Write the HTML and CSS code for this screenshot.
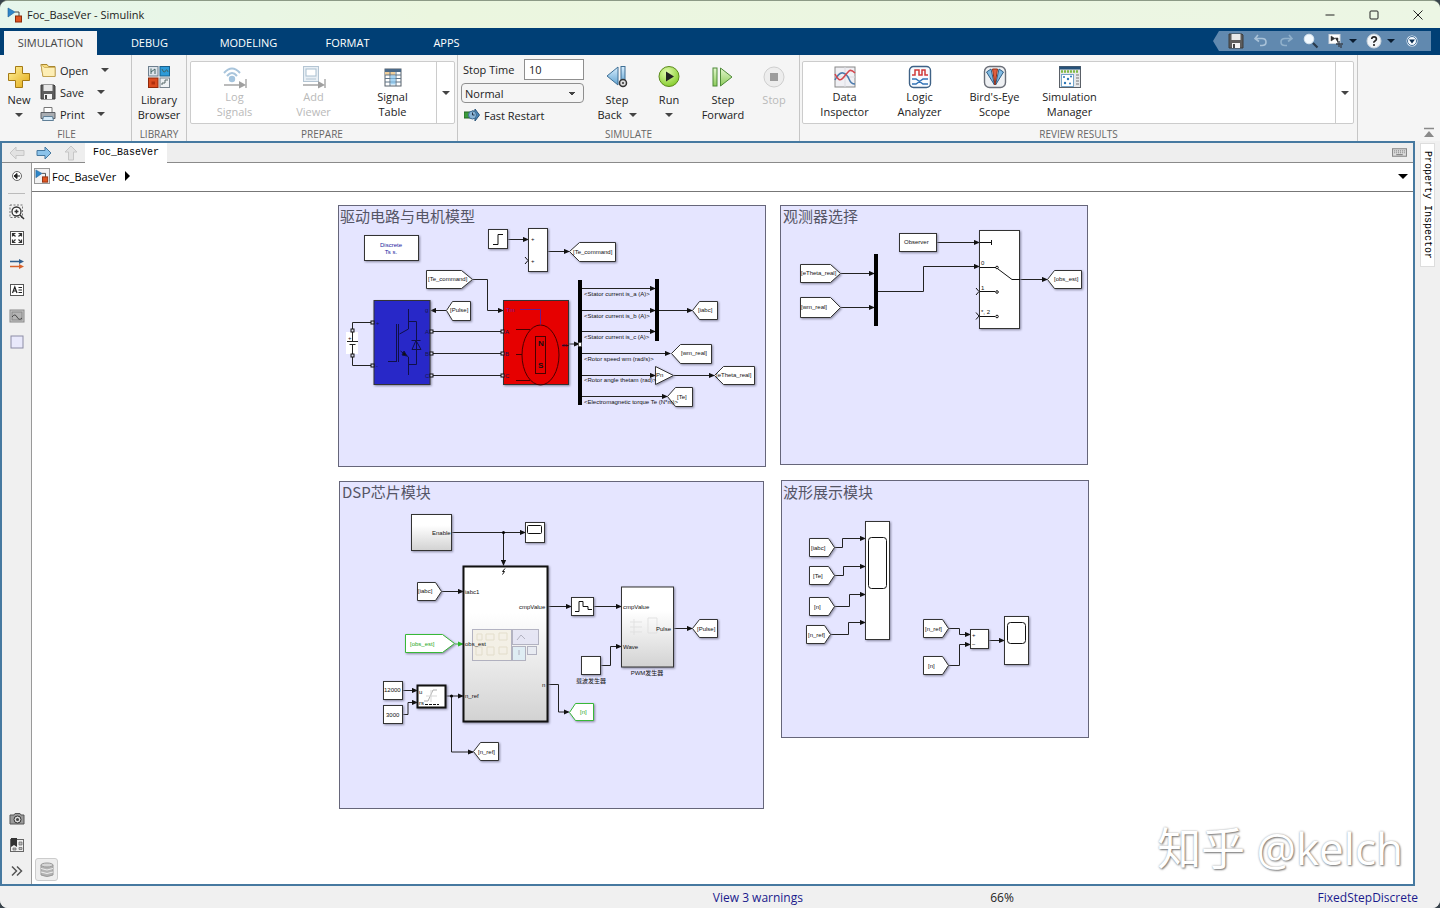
FILE: index.html
```html
<!DOCTYPE html>
<html lang="en">
<head>
<meta charset="utf-8">
<title>Foc_BaseVer - Simulink</title>
<link rel="stylesheet" href="styles.css">
</head>
<body>
<svg class="defs" aria-hidden="true">
  <defs>
    <linearGradient id="gold" x1="0" y1="0" x2="1" y2="1"><stop offset="0" stop-color="#fff3a0"/><stop offset="1" stop-color="#e3a913"/></linearGradient>
    <linearGradient id="sky" x1="0" y1="0" x2="0" y2="1"><stop offset="0" stop-color="#d9efff"/><stop offset="1" stop-color="#5fa2d0"/></linearGradient>
    <linearGradient id="leaf" x1="0" y1="0" x2="0" y2="1"><stop offset="0" stop-color="#e4f7cf"/><stop offset="1" stop-color="#8ccb5a"/></linearGradient>
    <radialGradient id="go" cx=".4" cy=".3" r=".8"><stop offset="0" stop-color="#e2fbb0"/><stop offset="1" stop-color="#7cc81e"/></radialGradient>
    <linearGradient id="sub" x1="0" y1="0" x2="0" y2="1"><stop offset=".3" stop-color="#fff"/><stop offset="1" stop-color="#d2d2d2"/></linearGradient>
    <marker id="arr" viewBox="0 0 6 6" refX="5" refY="3" markerWidth="6" markerHeight="6" markerUnits="userSpaceOnUse" orient="auto"><path d="M0 0.4L6 3L0 5.6z" fill="#111"/></marker>
    <marker id="arrg" viewBox="0 0 6 6" refX="5" refY="3" markerWidth="6" markerHeight="6" markerUnits="userSpaceOnUse" orient="auto"><path d="M0 0.4L6 3L0 5.6z" fill="#2fb52f"/></marker>
    <symbol id="model" viewBox="0 0 16 16"><path d="M1 1l7 4-7 5z" fill="#2e86c8" stroke="#1b5d93" stroke-width=".6"/><path d="M8 5h4v4" fill="none" stroke="#444"/><rect x="8.500" y="9" width="6" height="6" fill="#e0551f" stroke="#8e2c0a"/></symbol>
    <symbol id="disk" viewBox="0 0 16 16"><path d="M1 1h13l1 1v13H1z" fill="#5d5d5d" stroke="#3c3c3c"/><rect x="3.500" y="1" width="9" height="6" fill="#e8e8e8"/><rect x="4" y="10" width="8" height="5" fill="#f4f4f4"/><rect x="5" y="11" width="2" height="4" fill="#444"/></symbol>
    <symbol id="left" viewBox="0 0 16 14"><path d="M1 7l6-6v3.500h8v5H7V13z"/></symbol>
  </defs>
</svg>

<div class="window">
  <header class="titlebar">
    <svg class="i16"><use href="#model"/></svg>
    <h1>Foc_BaseVer - Simulink</h1>
    <div class="wincontrols">
      <button aria-label="Minimize"><svg viewBox="0 0 10 10"><path d="M.5 5h9"/></svg></button>
      <button aria-label="Maximize"><svg viewBox="0 0 10 10"><rect x="1" y="1" width="8" height="8" rx="1"/></svg></button>
      <button aria-label="Close"><svg viewBox="0 0 10 10"><path d="M.5.5l9 9M9.500.5l-9 9"/></svg></button>
    </div>
  </header>

  <nav class="tabs">
    <button class="tab active">SIMULATION</button>
    <button class="tab">DEBUG</button>
    <button class="tab">MODELING</button>
    <button class="tab">FORMAT</button>
    <button class="tab">APPS</button>
    <div class="quick">
      <button aria-label="Save"><svg class="i16"><use href="#disk"/></svg></button>
      <button aria-label="Undo"><svg class="i16" viewBox="0 0 16 16"><path d="M5 2L2 5.500l4 3M2.500 5.500H9q4 0 4 3.500t-4 3.500H7" fill="none" stroke="#a9c2d8" stroke-width="1.600"/></svg></button>
      <button aria-label="Redo"><svg class="i16" viewBox="0 0 16 16"><path d="M11 2l3 3.500-4 3M13.500 5.500H7q-4 0-4 3.500t4 3.500h2" fill="none" stroke="#90b0cb" stroke-width="1.600"/></svg></button>
      <button aria-label="Find"><svg class="i16" viewBox="0 0 16 16"><circle cx="6" cy="6" r="4.800" fill="#f3faff" stroke="#d7e4ee"/><path d="M10 10l4.500 4.500" stroke="#2a3b4c" stroke-width="2.200"/></svg></button>
      <button class="drop" aria-label="Favorites"><svg class="i16" viewBox="0 0 16 16"><rect x="1" y="1.500" width="11" height="9" fill="#fff" stroke="#cfd6dd"/><path d="M3 3l4 2.500L3 8zM7 5h3v5" fill="#333" stroke="#333" stroke-width=".5"/><path d="M8 11h7M11 8v6M13 12v3" stroke="#3b4450" stroke-width="1.400"/></svg><i class="caret dark"></i></button>
      <button class="drop" aria-label="Help"><svg class="i16" viewBox="0 0 16 16"><circle cx="8" cy="8" r="7" fill="#f1f5f8" stroke="#c9d3dc"/><path d="M5.700 6Q5.900 3.800 8.100 3.800T10.400 6Q10.400 7.200 9 8T8 9.800" fill="none" stroke="#222" stroke-width="1.700"/><circle cx="8" cy="12" r="1.100" fill="#222"/></svg><i class="caret dark"></i></button>
      <button aria-label="Minimize toolstrip"><svg class="i16" viewBox="0 0 16 16"><circle cx="8" cy="8" r="5.500" fill="#f7fbff"/><circle cx="8" cy="8" r="4.500" fill="none" stroke="#174d80" stroke-width=".8"/><path d="M5 6.500h6L8 10.500z" fill="#0b2c4f"/></svg></button>
    </div>
  </nav>

  <section class="ribbon">
    <div class="group file">
      <div class="body">
        <button class="big new"><svg class="i24" viewBox="0 0 24 24"><path d="M8.500 1.500h7v7h7v7h-7v7h-7v-7h-7v-7h7z" fill="url(#gold)" stroke="#a57a14"/></svg><span>New</span><i class="caret"></i></button>
        <div class="stack">
          <button class="small"><svg class="i16" viewBox="0 0 16 16"><path d="M1 2.500h6l1.500 2H15v10H3z" fill="#f8dc80" stroke="#a9862f"/><path d="M1 2.500l2 12h12V5.500H4.500z" fill="#fdeeb5" stroke="#b8963c" stroke-width=".6"/></svg><span class="wide-label">Open</span><i class="caret"></i></button>
          <button class="small"><svg class="i16"><use href="#disk"/></svg><span>Save</span><i class="caret"></i></button>
          <button class="small"><svg class="i16" viewBox="0 0 16 16"><path d="M4 1.500h8v5H4z" fill="#fff" stroke="#777"/><path d="M1 6.500h14v6H1z" fill="#a9adb2" stroke="#5c6066"/><path d="M3.500 10.500h9l1 4h-11z" fill="#d8ecfa" stroke="#5f7f97"/></svg><span>Print</span><i class="caret"></i></button>
        </div>
      </div>
      <h2>FILE</h2>
    </div>

    <div class="group library">
      <div class="body">
        <button class="big"><svg class="i24" viewBox="0 0 24 24"><g stroke-width="1"><rect x="1.500" y="1.500" width="9.500" height="9.500" fill="#dde4ea" stroke="#6d7f8e"/><rect x="13" y="1.500" width="9.500" height="9.500" fill="#2e9bd8" stroke="#17618e"/><rect x="1.500" y="13" width="9.500" height="9.500" fill="#dc4b1e" stroke="#8f2a0b"/><rect x="13" y="13" width="9.500" height="9.500" fill="#eef1f3" stroke="#77838d"/><path d="M4 9V3.500M4 7l4-3v5M15 4q2 5 3.500 2t2.500 1" fill="none" stroke="#466"/><path d="M4.500 16.500h3.500v3h-3.500z" fill="#b02f0d" stroke="none"/><path d="M15 20v-2h3v-3h3" fill="none" stroke="#566"/></g></svg><span>Library<br>Browser</span></button>
      </div>
      <h2>LIBRARY</h2>
    </div>

    <div class="group prepare">
      <div class="body">
        <div class="gallery">
          <div class="items">
            <button class="big" disabled><svg class="i24" viewBox="0 0 24 24"><g fill="none" stroke="#a9c5dc" stroke-width="2"><path d="M1 8Q9-1 17 8M4 11q5-6 10 0"/></g><circle cx="9" cy="14" r="3.200" fill="#a4c4de"/><path d="M1 20h16M23 14v9" stroke="#a5a5a5" stroke-width="1.400"/><path d="M16 16l7 4-7 3.500z" fill="#a0a0a0"/></svg><span>Log<br>Signals</span></button>
            <button class="big" disabled><svg class="i24" viewBox="0 0 24 24"><rect x="1.500" y="1.500" width="15" height="15" fill="#e8eff5" stroke="#b4c5d3"/><rect x="4" y="4" width="10" height="7" fill="#fff" stroke="#a9bfd0"/><path d="M4 14h10" stroke="#b4c5d3"/><path d="M1 20h16M23 14v9" stroke="#a5a5a5" stroke-width="1.400"/><path d="M16 16l7 4-7 3.500z" fill="#a0a0a0"/></svg><span>Add<br>Viewer</span></button>
            <button class="big"><svg class="i24" viewBox="0 0 24 24"><rect x="4" y="4" width="16" height="17" fill="#fff" stroke="#56616b"/><path d="M4 4h16v3H4z" fill="#4c6a88"/><path d="M4 7h10v3H4z" fill="#f1cf9a"/><path d="M4 10h16M4 13.500h16M4 17h16M9 7v14M15 7v14" stroke="#5f7487"/><rect x="9.500" y="10.500" width="5" height="9" fill="#7fc2ee" opacity=".7"/></svg><span>Signal<br>Table</span></button>
          </div>
          <button class="more" aria-label="More prepare tools"><i class="caret"></i></button>
        </div>
      </div>
      <h2>PREPARE</h2>
    </div>

    <div class="group simulate">
      <div class="body">
        <div class="settings">
          <div class="field"><label for="stop">Stop Time</label><input id="stop" type="text" value="10"></div>
          <select aria-label="Simulation mode"><option>Normal</option></select>
          <button class="restart"><svg class="i16" viewBox="0 0 16 16"><rect x="0" y="5" width="6" height="6" fill="#3a9a3a" stroke="#256825"/><path d="M8 4h3V2l4.500 6-4.500 6v-3H8z" fill="#4a86b8" stroke="#2a5478"/><circle cx="8.500" cy="8" r="4" fill="#8ab4d6" stroke="#3d6b91"/><path d="M8.500 5.500V8h2" fill="none" stroke="#234"/></svg><span>Fast Restart</span></button>
        </div>
        <button class="big run back"><svg class="i24" viewBox="0 0 24 24"><path d="M13 2v18L2 11z" fill="url(#sky)" stroke="#3e6f95"/><rect x="16" y="1.500" width="4" height="17" fill="url(#sky)" stroke="#3e6f95"/><circle cx="18" cy="18" r="3.500" fill="#ddd" stroke="#333" stroke-width="1.500"/><circle cx="18" cy="18" r="1" fill="#333"/></svg><span>Step<br>Back <i class="caret inline"></i></span></button>
        <button class="big run"><svg class="i24" viewBox="0 0 24 24"><circle cx="12" cy="11.500" r="10" fill="url(#go)" stroke="#5b8a1c"/><path d="M9 6.500l8 5-8 5z" fill="#222"/></svg><span>Run</span><i class="caret"></i></button>
        <button class="big run fwd"><svg class="i24" viewBox="0 0 24 24"><rect x="2" y="3" width="4" height="18" fill="url(#leaf)" stroke="#4d8a37"/><path d="M9.500 3v18L21 12z" fill="url(#leaf)" stroke="#4d8a37"/></svg><span>Step<br>Forward</span></button>
        <button class="big run stop" disabled><svg class="i24" viewBox="0 0 24 24"><circle cx="12" cy="12" r="10" fill="#ededed" stroke="#cfcfcf"/><rect x="8" y="8" width="8" height="8" fill="#9c9c9c"/></svg><span>Stop</span></button>
      </div>
      <h2>SIMULATE</h2>
    </div>

    <div class="group review">
      <div class="body">
        <div class="gallery">
          <div class="items">
            <button class="big"><svg class="i24" viewBox="0 0 24 24"><rect x="2" y="2" width="20" height="20" fill="#f0f0f4" stroke="#888"/><path d="M2 12h20M12 2v20" stroke="#dcdce2"/><path d="M2 15q4-8 8-7t6 6 6 5" fill="none" stroke="#4d7cae" stroke-width="1.600"/><path d="M2 9q4 9 8 4t6-7 6 2" fill="none" stroke="#d4484f" stroke-width="1.600"/></svg><span>Data<br>Inspector</span></button>
            <button class="big"><svg class="i24" viewBox="0 0 24 24"><rect x="1.500" y="1.500" width="21" height="21" rx="4" fill="#f8fbff" stroke="#3f6286" stroke-width="1.400"/><path d="M4 10h3V5h4v5h3V5h3v5h3" fill="none" stroke="#cf3a3a" stroke-width="1.500"/><path d="M4 14h4l7 5h5M4 19h4l7-5h5" fill="none" stroke="#3274b8" stroke-width="1.400"/></svg><span>Logic<br>Analyzer</span></button>
            <button class="big"><svg class="i24" viewBox="0 0 24 24"><rect x="1.500" y="1.500" width="21" height="21" rx="5" fill="#eef0f3" stroke="#6b6f78" stroke-width="1.400"/><path d="M3.500 7L8 4l3.500 16z" fill="#7fbbe4" stroke="#315f86"/><path d="M20.500 7L16 4l-3.500 16z" fill="#7fbbe4" stroke="#315f86"/><path d="M9.500 4h5L12 20z" fill="#e0603f" stroke="#963119"/></svg><span>Bird's-Eye<br>Scope</span></button>
            <button class="big"><svg class="i24" viewBox="0 0 24 24"><rect x="1.500" y="1.500" width="21" height="21" fill="#e6e8ea" stroke="#5a6067"/><path d="M1.500 1.500h21v3h-21z" fill="#27527a"/><path d="M3 6.500h18" stroke="#7fb843" stroke-width="2.500" stroke-dasharray="2 1"/><rect x="3.500" y="9.500" width="12" height="12" fill="#fff" stroke="#77a5c8"/><g fill="#2876b8"><circle cx="6" cy="12" r="1"/><circle cx="10" cy="14" r="1.200"/><circle cx="13" cy="11.500" r="1"/><circle cx="7" cy="18" r="1.200"/><circle cx="12" cy="18.500" r="1"/></g><path d="M18 10h3M18 13h3M18 16h3M18 19h3" stroke="#777"/></svg><span>Simulation<br>Manager</span></button>
          </div>
          <button class="more" aria-label="More review tools"><i class="caret"></i></button>
        </div>
      </div>
      <h2>REVIEW RESULTS</h2>
    </div>
    <button class="collapse" aria-label="Collapse toolstrip"><svg viewBox="0 0 12 12"><path d="M1 1.500h10" stroke="#8a8a8a" stroke-width="1.500"/><path d="M6 4l5 6H1z" fill="#8a8a8a"/></svg></button>
  </section>

  <div class="workspace">
    <section class="editor">
      <div class="doctabs">
        <button aria-label="Back"><svg viewBox="0 0 16 14" fill="#e2e2e2" stroke="#c6c6c6"><use href="#left"/></svg></button>
        <button aria-label="Forward"><svg class="flip" viewBox="0 0 16 14" fill="#8cc3ea" stroke="#47799f"><use href="#left"/></svg></button>
        <button aria-label="Up to parent"><svg class="up" viewBox="0 0 16 14" fill="#e2e2e2" stroke="#c6c6c6"><use href="#left"/></svg></button>
        <button class="doctab">Foc_BaseVer</button>
        <button class="keyboard" aria-label="Keyboard shortcuts"><svg viewBox="0 0 14 8"><rect x=".5" y=".5" width="13" height="7" fill="#ddd" stroke="#888"/><path d="M2 2.500h10M2 4.200h10" stroke="#888" stroke-dasharray="1 .8"/><path d="M4 6h6" stroke="#888"/></svg></button>
      </div>
      <div class="main">
        <aside class="palette">
          <button aria-label="Hide browser"><svg class="i16" viewBox="0 0 16 16"><circle cx="8" cy="8" r="4.500" fill="#fff" stroke="#666"/><path d="M5 8l3-2.500v5zM8 8h3" fill="#222" stroke="#222"/></svg></button>
          <hr>
          <button aria-label="Zoom"><svg class="i16" viewBox="0 0 16 16"><rect x="1" y="1" width="12.500" height="12.500" fill="none" stroke="#777" stroke-dasharray="2 1.500"/><circle cx="7.500" cy="7.500" r="4.500" fill="#fff" stroke="#333" stroke-width="1.300"/><path d="M5.500 7.500h4M7.500 5.500v4M11 11l4 4" stroke="#333" stroke-width="1.500"/></svg></button>
          <button aria-label="Fit to view"><svg class="i16" viewBox="0 0 16 16"><rect x="1.500" y="1.500" width="13" height="13" fill="#fff" stroke="#555"/><g fill="none" stroke="#333" stroke-width="1.200"><path d="M3.500 6.500v-3h3M3.500 3.500l3 3M9.500 3.500h3v3M12.500 3.500l-3 3M3.500 9.500v3h3M3.500 12.500l3-3M12.500 9.500v3h-3M12.500 12.500l-3-3"/></g></svg></button>
          <button aria-label="Sample time"><svg class="i16" viewBox="0 0 16 16"><path d="M1 5.500h10" stroke="#2f5e8d" stroke-width="1.500"/><path d="M10 3l5 2.500L10 8z" fill="#2f5e8d"/><path d="M1 10.500h10" stroke="#d9622b" stroke-width="1.500"/><path d="M10 8l5 2.500-5 2.500z" fill="#d9622b"/></svg></button>
          <button aria-label="Annotation"><svg class="i16" viewBox="0 0 16 16"><rect x="1.500" y="2.500" width="13" height="11" fill="#fff" stroke="#555"/><path d="M3.500 11l2.300-6 2.200 6M4.300 9h3M9.500 5.500h3.500M9.500 8h3.500M9.500 10.500h3.500" fill="none" stroke="#222" stroke-width="1.200"/></svg></button>
          <button aria-label="Image"><svg class="i16" viewBox="0 0 16 16"><rect x="1" y="2" width="14" height="12" fill="#c9c9c9" stroke="#888"/><rect x="3" y="4" width="10" height="8" fill="#b4b4b4" stroke="#888"/><path d="M3 9q3-4 5 0t5 1" fill="none" stroke="#444"/></svg></button>
          <button aria-label="Area"><svg class="i16" viewBox="0 0 16 16"><rect x="2" y="2" width="12" height="12" fill="#e9e9fb" stroke="#8c8ca5"/></svg></button>
          <div class="spacer"></div>
          <button aria-label="Screenshot"><svg class="i16" viewBox="0 0 16 16"><path d="M1 4h4l1-1.500h5L12 4h3v9H1z" fill="#9a9a9a" stroke="#555"/><circle cx="8.500" cy="8.500" r="3.500" fill="#ddd" stroke="#333"/><circle cx="8.500" cy="8.500" r="1.500" fill="#444"/></svg></button>
          <button aria-label="Bookmarks"><svg class="i16" viewBox="0 0 16 16"><rect x="1.500" y="2.500" width="13" height="12" fill="#eee" stroke="#666"/><path d="M2 1h6v9L5 8l-3 2z" fill="#333"/><path d="M10 5h3v3h-3zM10 10.500h3v2h-3zM4 11h3v2H4z" fill="#bbb" stroke="#666" stroke-width=".7"/></svg></button>
          <button aria-label="Expand"><svg class="i16" viewBox="0 0 16 16"><path d="M3 3.500L7.500 8 3 12.500M8 3.500l4.500 4.500L8 12.500" fill="none" stroke="#555" stroke-width="1.500"/></svg></button>
        </aside>
        <div class="view">
          <div class="crumbs">
            <svg class="i16 boxed"><use href="#model"/></svg>
            <a href="#canvas">Foc_BaseVer</a><i class="tri"></i>
            <button class="history" aria-label="Path history"><i class="caret wide"></i></button>
          </div>
          <div class="canvas" id="canvas">
            <svg class="diagram" role="img" aria-label="Foc_BaseVer block diagram">
              <g transform="translate(-32 -192)">
                <g class="area">
                  <rect x="338.500" y="205.500" width="427" height="261"/>
                  <rect x="780.500" y="205.500" width="307" height="259"/>
                  <rect x="339.500" y="481.500" width="424" height="327"/>
                  <rect x="781.500" y="480.500" width="307" height="257"/>
                </g>
                <g class="area-name">
                  <text x="340" y="222">驱动电路与电机模型</text>
                  <text x="783" y="222">观测器选择</text>
                  <text x="342" y="498">DSP芯片模块</text>
                  <text x="783" y="498">波形展示模块</text>
                </g>

                <!-- drive circuit and motor -->
                <g class="wire">
                  <path d="M508 239.500h20"/><path d="M547 251.500h22"/>
                  <path d="M473 279.500h14.500v31H503"/><path d="M446 310.500h-15"/>
                  <path d="M569 344h10"/>
                  <path d="M581 288.500h74"/><path d="M581 310.500h74"/><path d="M581 331.500h74"/>
                  <path d="M581 353.500h89"/><path d="M581 375.500h74"/><path d="M581 396.500h86"/>
                  <path d="M658 310.500h34"/><path d="M674 375.500h40"/>
                </g>
                <g class="line">
                  <path d="M431 331.500h73M431 353.500h73M431 375.500h73M374 322.500h-21.500v8M374 365.500h-21.500v-11"/>
                </g>
                <g class="blk">
                  <rect x="364.500" y="235.500" width="54" height="25"/>
                  <rect x="488.500" y="229.500" width="19" height="19"/>
                  <rect x="528.500" y="228.500" width="19" height="43"/>
                  <path d="M426.500 270.500h35l11 9-11 9h-35z"/>
                  <path d="M615.500 242.500h-36l-10 9 10 10h36z"/>
                  <path d="M470.500 301.500h-18l-6 9 6 10h18z"/>
                  <path d="M717.500 301.500h-18l-7 9 7 9h18z"/>
                  <path d="M711.500 344.500h-31l-9 9 9 10h31z"/>
                  <path d="M754.500 366.500h-31l-9 9 9 9h31z"/>
                  <path d="M692.500 387.500h-17l-8 9 8 10h17z"/>
                  <path d="M655.500 366.500v18l18-9z"/>
                  <rect x="374" y="300.500" width="56" height="84" fill="#2828c8"/>
                  <rect x="503.500" y="300.500" width="65" height="84" fill="#e60000"/>
                </g>
                <g class="bar">
                  <rect x="578" y="280" width="4" height="125"/><rect x="655" y="279" width="4" height="62"/>
                </g>
                <rect x="578.500" y="342.500" width="3" height="4" fill="#fff" stroke="#333" stroke-width=".6"/>
                <g class="pen">
                  <path d="M493 244.500h5v-10h5M525 257l3 3.500-3 3.500"/>
                </g>
                <g class="pen faint">
                  <path d="M408.500 309v20l-9 5M400.500 351l8 6v18M408.500 321.500h8v43h-8M396.500 324v38M398.500 324v38M388 361.500h9M412 349.500l4-9 5 9zM411.500 340.500h9"/>
                  <path d="M402 355l5 1-3-5z" fill="#111"/>
                </g>
                <g class="pen faint red">
                  <ellipse cx="540.500" cy="355" rx="18.500" ry="30"/>
                  <rect x="535.500" y="336.500" width="10" height="37"/>
                  <path d="M516 329.500h14M516 354.500h6M516 380.500h14M562 345.500h7"/>
                </g>
                <path d="M520 309.500h20.500v15" class="violet"/>
                <g class="bold"><text x="538" y="346">N</text><text x="538" y="368">S</text></g>
                <rect x="346" y="332" width="12" height="22" fill="#fff"/>
                <path d="M352.500 332v9.500M347 341.500h11M349.500 344.500h6M352.500 345v9" class="stroke"/>
                <g class="port">
                  <rect x="371" y="321" width="3" height="3"/><rect x="371" y="364" width="3" height="3"/>
                  <rect x="351" y="329" width="3" height="3"/><rect x="351" y="354" width="3" height="3"/>
                  <rect x="430" y="330" width="3" height="3"/><rect x="430" y="352" width="3" height="3"/><rect x="430" y="374" width="3" height="3"/>
                  <rect x="501" y="330" width="3" height="3"/><rect x="501" y="352" width="3" height="3"/><rect x="501" y="374" width="3" height="3"/>
                </g>
                <g class="t blue"><text x="391" y="247" class="mid">Discrete</text><text x="391" y="254" class="mid">Ts s.</text></g>
                <g class="t">
                  <text x="531" y="241">+</text><text x="531" y="263">+</text>
                  <text x="428" y="281">[Te_command]</text><text x="573" y="254">[Te_command]</text>
                  <text x="450" y="312">[Pulse]</text><text x="698" y="312">[iabc]</text>
                  <text x="681" y="355">[wm_real]</text><text x="716" y="377">[eTheta_real]</text>
                  <text x="677" y="399">[Te]</text><text x="656" y="377">Pn</text>
                  <text x="348" y="340">+</text>
                </g>
                <g class="t dim">
                  <text x="376" y="325">+</text><text x="376" y="368">-</text><text x="425" y="312">g</text><text x="425" y="334">A</text><text x="425" y="356">B</text><text x="425" y="378">C</text>
                  <text x="505" y="334">A</text><text x="505" y="356">B</text><text x="505" y="378">C</text><text x="562" y="347">m</text>
                </g>
                <g class="t purple"><text x="506" y="312">Tm</text></g>
                <g class="t">
                  <text x="584" y="296">&lt;Stator current is_a (A)&gt;</text>
                  <text x="584" y="318">&lt;Stator current is_b (A)&gt;</text>
                  <text x="584" y="339">&lt;Stator current is_c (A)&gt;</text>
                  <text x="584" y="361">&lt;Rotor speed wm (rad/s)&gt;</text>
                  <text x="584" y="382">&lt;Rotor angle thetam (rad)&gt;</text>
                  <text x="584" y="404">&lt;Electromagnetic torque Te (N*m)&gt;</text>
                </g>

                <!-- observer selection -->
                <g class="wire">
                  <path d="M937 242.500h42"/><path d="M841 273.500h33"/><path d="M841 307.500h33"/>
                  <path d="M878 291.500h45.500v-25H979"/><path d="M1020 279.500h27"/>
                </g>
                <g class="blk">
                  <rect x="899.500" y="233.500" width="37" height="18"/>
                  <rect x="979.500" y="230.500" width="40" height="98"/>
                  <path d="M800.500 264.500h30l10 9-10 9h-30z"/>
                  <path d="M800.500 297.500h30l10 10-10 10h-30z"/>
                  <path d="M1081.500 270.500h-27l-7 9 7 9h27z"/>
                </g>
                <g class="bar"><rect x="874" y="254" width="4" height="72"/></g>
                <g class="pen">
                  <path d="M980 242.500h11.500M991.500 240v5M980 267.500h16M998 269l14 10.500h8M980 291.500h15M980 316.500h15M976 288l3 3.500-3 3.500M976 312.500l3 3.500-3 3.500"/>
                  <circle cx="997" cy="267.500" r="1.300"/><circle cx="997" cy="292" r="1.300"/><circle cx="997" cy="316.500" r="1.300"/>
                </g>
                <g class="t">
                  <text x="904" y="244">Observer</text><text x="801" y="275">[eTheta_real]</text><text x="801" y="309">[wm_real]</text>
                  <text x="1054" y="281">[obs_est]</text><text x="981" y="265">0</text><text x="981" y="290">1</text><text x="981" y="314">*, 2</text>
                </g>

                <!-- DSP chip -->
                <g class="wire">
                  <path d="M452 532.500h73"/><path d="M503.500 532v33"/><path d="M442 591.500h21"/>
                  <path d="M403 690.500h14"/><path d="M403 714.500h5v-12h9"/><path d="M446 696h17"/>
                  <path d="M451.500 696v56H473"/><path d="M548 606.500h23"/><path d="M594 606.500h27"/>
                  <path d="M601 665.500h9.500v-19H621"/><path d="M548 684.500h10.500v27.500h10"/><path d="M674 628.500h18"/>
                </g>
                <path d="M455 644h8" class="wireg"/>
                <circle cx="503.500" cy="532.500" r="1.500"/><circle cx="451.500" cy="696" r="1.500"/>
                <g class="blk">
                  <rect x="411.500" y="514.500" width="40" height="36" fill="url(#sub)"/>
                  <rect x="525.500" y="522.500" width="19" height="20"/>
                  <rect x="463.500" y="566.500" width="84" height="155" fill="url(#sub)" class="thick"/>
                  <path d="M417.500 582.500h18l6 9-6 9h-18z"/>
                  <rect x="383.500" y="681.500" width="19" height="18"/><rect x="383.500" y="705.500" width="19" height="18"/>
                  <rect x="417.500" y="685.500" width="28" height="22" class="thick"/>
                  <path d="M498.500 742.500h-18l-7 9 7 9h18z"/>
                  <rect x="571.500" y="597.500" width="22" height="18"/>
                  <rect x="621.500" y="587" width="52" height="80" fill="url(#sub)"/>
                  <rect x="581.500" y="656.500" width="19" height="18"/>
                  <path d="M717.500 619.500h-18l-7 9 7 9h18z"/>
                </g>
                <g class="blk green">
                  <path d="M405.500 634.500h37l12 9-12 9h-37z"/><path d="M593.500 703.500h-18l-6 9 6 8h18z"/>
                </g>
                <g class="pen">
                  <rect x="527.500" y="525.500" width="14" height="8" rx="1"/>
                  <path d="M505 568.500l-2.500 3h2l-2 3"/>
                  <path d="M575 611.500h4v-10h4v5h5v3h4"/>
                  <path d="M425 704.500h14" stroke-dasharray="3 1"/>
                </g>
                <g class="thumb">
                  <rect x="472.500" y="629.500" width="39" height="31" fill="#f4f0e4"/><rect x="512.500" y="629.500" width="26" height="15" fill="#e2e2f4"/>
                  <rect x="512.500" y="646.500" width="13" height="14" fill="#dcedf5"/><rect x="527.500" y="646.500" width="9" height="8" fill="#e7ebf3"/>
                  <path d="M517 640l4-5 4 4M519 650v5" fill="none"/>
                  <path d="M477 634h5v6h-5zM486 634h8v6h-8zM499 633h8v7h-8zM476 647h6v8h-6zM487 647h7v8h-7zM499 647h8v7h-8z" fill="none" stroke="#e0d9c2"/>
                  <path d="M424 701h4l5-11h4" fill="none" stroke="#999"/><path d="M431 690v12M426 696h11" stroke="#ccc"/>
                  <path d="M630 622h12M630 627h12M630 632h12M634 619v16M648 618h9v15h-9z" fill="none" stroke="#ddd"/>
                </g>
                <g class="t">
                  <text x="432" y="535">Enable</text><text x="465" y="594">iabc1</text><text x="519" y="609">cmpValue</text><text x="465" y="646">obs_est</text>
                  <text x="465" y="698">n_ref</text><text x="542" y="687">n</text><text x="418" y="593">[iabc]</text><text x="384" y="692">12000</text><text x="386" y="717">3000</text>
                  <text x="419" y="694">u</text><text x="419" y="705">rs</text><text x="478" y="754">[n_ref]</text><text x="623" y="609">cmpValue</text><text x="623" y="649">Wave</text>
                  <text x="656" y="631">Pulse</text><text x="697" y="631">[Pulse]</text><text x="647" y="675" class="mid">PWM发生器</text><text x="591" y="683" class="mid">载波发生器</text>
                </g>
                <g class="t greent"><text x="410" y="646">[obs_est]</text><text x="580" y="714">[n]</text></g>

                <!-- waveform display -->
                <g class="wire">
                  <path d="M834 547.500h8.500v-9H865"/><path d="M834 575.500h9.500v-9H865"/><path d="M834 606.500h15.500v-12H865"/><path d="M831 634.500h17.500v-12H865"/>
                  <path d="M949 628.500h10.500v6H970"/><path d="M949 665.500h10.500v-21H970"/><path d="M989 640.500h15"/>
                </g>
                <g class="blk">
                  <rect x="865.500" y="521.500" width="24" height="118"/>
                  <path d="M809.500 538.500h19l6 9-6 9h-19z"/><path d="M809.500 566.500h19l6 9-6 9h-19z"/>
                  <path d="M809.500 597.500h19l6 9-6 9h-19z"/><path d="M806.500 625.500h18l6 9-6 9h-18z"/>
                  <path d="M923.500 619.500h19l6 9-6 9h-19z"/><path d="M923.500 656.500h19l6 9-6 9h-19z"/>
                  <rect x="970.500" y="629.500" width="18" height="19"/><rect x="1004.500" y="616.500" width="24" height="48"/>
                </g>
                <g class="pen"><rect x="868.500" y="537.500" width="18" height="51" rx="3"/><rect x="1007.500" y="622.500" width="18" height="21" rx="3"/></g>
                <g class="t">
                  <text x="811" y="550">[iabc]</text><text x="813" y="578">[Te]</text><text x="814" y="609">[n]</text><text x="808" y="637">[n_ref]</text>
                  <text x="925" y="631">[n_ref]</text><text x="928" y="668">[n]</text><text x="972" y="637">+</text><text x="972" y="646">−</text>
                </g>
              </g>
            </svg>
            <button class="data" aria-label="Model data"><svg class="i16" viewBox="0 0 16 16"><path d="M2 3v10q6 3 12 0V3z" fill="#b4b4b4" stroke="#999"/><ellipse cx="8" cy="3" rx="6" ry="2" fill="#d6d6d6" stroke="#999"/><path d="M2 6.500q6 3 12 0M2 10q6 3 12 0" fill="none" stroke="#eee"/></svg></button>
            <div class="watermark">知乎 @kelch</div>
          </div>
        </div>
      </div>
    </section>
    <aside class="inspector"><button>Property Inspector</button></aside>
  </div>

  <footer class="status"><a href="#canvas" class="warnings">View 3 warnings</a><span class="zoom">66%</span><a href="#canvas">FixedStepDiscrete</a></footer>
</div>
</body>
</html>
```
FILE: styles.css
```css
* { box-sizing: border-box; }
body { margin: 0; background: #39444c; font: 11px/15px "Open Sans", "Noto Sans", "Noto Sans CJK SC", sans-serif; color: #222; }
button { border: 0; background: none; padding: 0; font: inherit; color: inherit; }
a { color: inherit; text-decoration: none; }
h1, h2 { margin: 0; font: inherit; }
svg { display: block; }
.defs { position: absolute; width: 0; height: 0; }
.i16 { width: 16px; height: 16px; flex: none; }
.i24 { width: 24px; height: 24px; flex: none; }

.window { height: 100vh; display: flex; flex-direction: column; background: #f0f0f0; border-radius: 8px; overflow: hidden; border-top: 1px solid #8c9a86; }

.titlebar { height: 27px; flex: none; display: flex; align-items: center; gap: 4px; padding-left: 7px; background: linear-gradient(90deg, #e6f6ec, #ebf6df 30%, #ecf6e4); }
.wincontrols { margin-left: auto; display: flex; }
.wincontrols button { width: 44px; height: 27px; display: grid; place-items: center; }
.wincontrols svg { width: 10px; height: 10px; fill: none; stroke: #222; }

.tabs { height: 27px; flex: none; display: flex; align-items: flex-end; background: #003f75; padding-left: 1px; }
.tab { width: 99px; height: 24px; padding-bottom: 2px; color: #fff; }
.tab.active { width: 93px; margin: 0 3px; background: #f5f5f5; color: #444; }
.quick { height: 20px; width: 218px; margin: 0 9px 4px auto; padding: 0 11px 0 15px; display: flex; align-items: center; justify-content: space-between; background: #6189af; clip-path: polygon(0 50%, 6px 0, 100% 0, 100% 100%, 6px 100%); }
.drop { display: flex; align-items: center; gap: 5px; }

.caret { display: block; width: 0; border: 4px solid transparent; border-top-color: #444; border-bottom-width: 0; }
.caret.dark { border-top-color: #0a1c30; }
.caret.inline { display: inline-block; margin: 0 0 2px 4px; }
.caret.wide { border-width: 5px 5px 0; border-top-color: #000; }

.ribbon { height: 86px; flex: none; display: flex; background: #f5f5f5; padding-left: 2px; }
.group { display: flex; flex-direction: column; border-right: 1px solid #c6c6c6; }
.group .body { height: 73px; display: flex; padding-top: 6px; }
.group h2 { line-height: 13px; text-align: center; color: #666; font-size: 10px; }
.file { width: 130px; }
.library { width: 55px; }
.prepare { width: 271px; }
.simulate { width: 342px; }
.review { flex: 1; }
.big { display: flex; flex-direction: column; align-items: center; text-align: center; gap: 3px; }
.big .caret { margin-top: 3px; }
.big .caret.inline { margin-top: 0; }
.big:disabled { color: #b9b9b9; }
.new { width: 34px; padding-top: 4px; }
.library .big { width: 100%; padding-top: 4px; }
.stack { margin: -2px 0 0 4px; }
.small { display: flex; align-items: center; height: 22px; gap: 4px; }
.small span { width: 33px; text-align: left; }
.small .wide-label { width: 37px; }
.gallery { flex: 1; height: 63px; display: flex; background: #fff; border: 1px solid #ccc; border-radius: 2px; margin: 0 3px; }
.items { flex: 1; display: flex; padding-top: 3px; }
.items .big { gap: 0; width: 75px; }
.prepare .gallery { margin-right: 2px; }
.prepare .items { justify-content: space-between; padding: 3px 4px 0; }
.prepare .items .big { width: 79px; }
.review .gallery { margin-left: 2px; }
.review .items { padding-left: 4px; }
.more { width: 18px; border-left: 1px solid #ccc; display: grid; place-items: center; }
.settings { width: 126px; padding-left: 3px; margin-top: -2px; }
.field { display: flex; align-items: center; justify-content: space-between; padding-left: 2px; }
.field input { width: 60px; height: 21px; font: inherit; border: 1px solid #8f8f8f; padding: 0 4px; color: #222; }
.settings select { display: block; width: 100%; height: 20px; margin: 3px 0 4px; padding: 0 3px; font: inherit; color: #222; border: 1px solid #8f8f8f; border-radius: 4px; appearance: none; background: linear-gradient(to bottom left, #444 50%, transparent 50%) 106px 8px / 4px 4px no-repeat, linear-gradient(to bottom right, #444 50%, transparent 50%) 110px 8px / 4px 4px no-repeat, #f5f5f5; }
.restart { display: flex; align-items: center; gap: 4px; padding-left: 3px; }
.run { width: 50px; padding-top: 4px; }
.back { width: 54px; margin-left: 6px; }
.fwd { width: 58px; }
.stop { width: 44px; }
.collapse { width: 82px; display: flex; align-items: flex-end; justify-content: flex-end; padding: 0 5px 2px 0; }
.collapse svg { width: 12px; height: 12px; }

.workspace { flex: 1; min-height: 0; display: flex; }
.editor { flex: 1; min-width: 0; display: flex; flex-direction: column; border: 2px solid #4679a0; }
.doctabs { height: 20px; flex: none; display: flex; align-items: center; background: #eee; border-bottom: 1px solid #8a8a8a; padding-left: 7px; }
.doctabs button { width: 27px; }
.doctabs svg { width: 16px; height: 14px; }
.flip { transform: scaleX(-1); }
.up { transform: rotate(90deg); }
.doctabs .doctab { width: auto; height: 20px; padding: 0 8px; margin-left: -5px; background: #fff; color: #000; font: 11px "Liberation Mono", monospace; font-size: 10px; }
.doctabs .keyboard { width: 16px; margin-left: auto; margin-right: 5px; }
.keyboard svg { width: 15px; height: 9px; }
.main { flex: 1; min-height: 0; display: flex; }
.palette { width: 30px; flex: none; display: flex; flex-direction: column; background: #f0f0f0; border-right: 1px solid #999; }
.palette button { height: 26px; display: grid; place-items: center; }
.palette hr { width: 17px; margin: 4px auto 5px; border: 0; border-top: 1px solid #bbb; }
.spacer { flex: 1; }
.view { flex: 1; min-width: 0; display: flex; flex-direction: column; }
.crumbs { height: 29px; flex: none; display: flex; align-items: center; padding: 0 5px 2px 2px; background: #fff; border-bottom: 1px solid #777; color: #000; }
.boxed { border: 1px solid #999; background: #f2f2f2; margin-right: 2px; }
.tri { margin-left: 9px; border: 5px solid transparent; border-left-color: #000; border-right-width: 0; }
.history { margin-left: auto; }
.canvas { flex: 1; min-height: 0; position: relative; overflow: hidden; background: #fff; }
.diagram { width: 100%; height: 100%; }
.data { position: absolute; left: 3px; bottom: 3px; width: 23px; height: 23px; display: grid; place-items: center; background: #eee; border: 1px solid #ccc; border-radius: 3px; }
.watermark { position: absolute; right: 10px; bottom: 10px; font: 44px/52px "Open Sans", "Noto Sans CJK SC", sans-serif; font-size: 44px; color: #fff; text-shadow: 1px 1px 2px #777, 0 0 2px #aaa; }

.area rect { fill: #e5e5ff; stroke: #66667a; }
.area-name { font: 15px "Noto Sans CJK SC", sans-serif; fill: #555566; }
.wire path { fill: none; stroke: #222; marker-end: url(#arr); }
.wireg { fill: none; stroke: #2fb52f; marker-end: url(#arrg); }
.line path, .stroke { fill: none; stroke: #222; }
.blk { stroke: #333; filter: drop-shadow(1px 1px 1px #8888a0); }
.blk > :not([fill]) { fill: #fff; }
.blk .thick { stroke: #111; stroke-width: 2; }
.blk.green { stroke: #38b838; }
.bar { fill: #000; }
.pen { fill: none; stroke: #111; }
.pen.faint { stroke: #10104a; }
.pen.red { stroke: #4a0000; }
.violet { fill: none; stroke: #6a1a8a; }
.port { fill: #dde; stroke: #111; }
.thumb { stroke: #a3a3b5; opacity: .8; }
.t { font: 6px "Liberation Sans", "Noto Sans CJK SC", sans-serif; fill: #111; }
.t .mid { text-anchor: middle; }
.t.blue { fill: #1a1aa0; }
.t.dim { fill: #181850; }
.t.purple { fill: #7a1aa0; }
.t.greent { fill: #24a824; }
.bold { font: bold 8px "Liberation Sans", sans-serif; fill: #111; }

.inspector { width: 25px; flex: none; background: #f0f0f0; padding: 2px 0 0 5px; }
.inspector button { writing-mode: vertical-rl; white-space: nowrap; padding: 7px 0; width: 15px; background: #fff; border: 1px solid #ddd; font: 10px/13px "Liberation Mono", monospace; color: #000; }

.status { height: 22px; flex: none; display: flex; align-items: center; padding: 0 22px 0 49.5%; background: #f0f0f0; color: #1a1a8c; font-size: 12px; }
.status .warnings { flex: 278; }
.status .zoom { flex: 328; color: #222; }
```
